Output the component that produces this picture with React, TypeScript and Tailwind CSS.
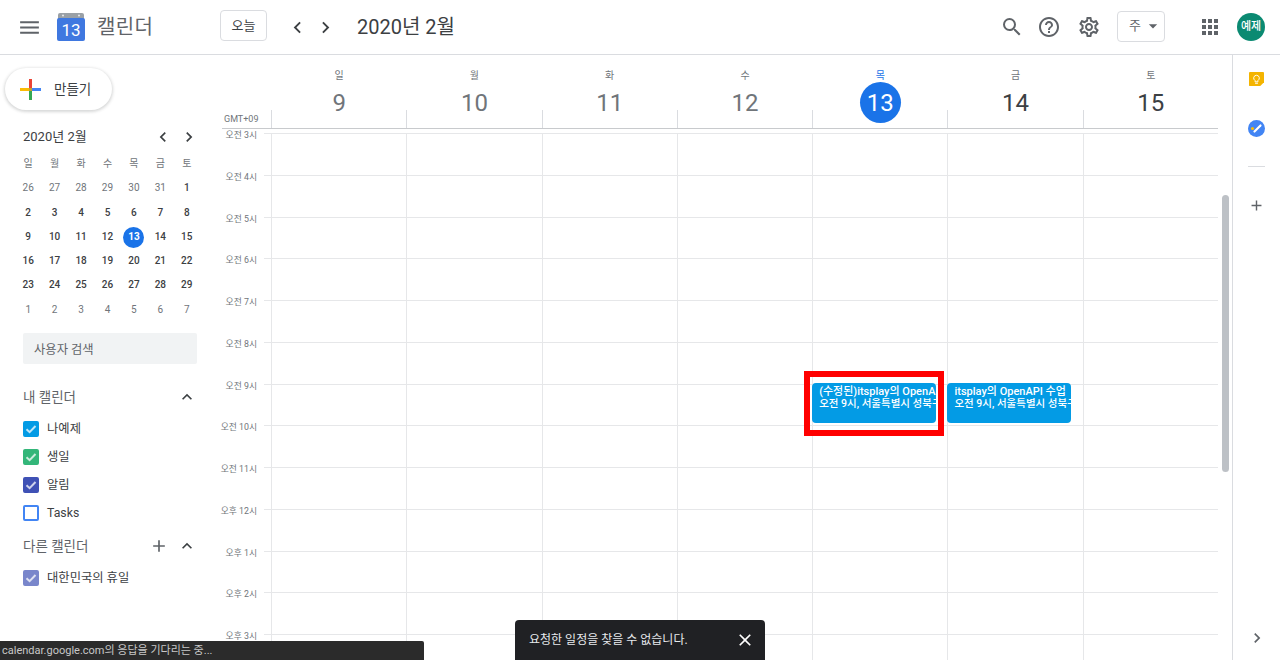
import {
  MdAdd,
  MdApps,
  MdArrowDropDown,
  MdChevronLeft,
  MdChevronRight,
  MdClose,
  MdExpandLess,
  MdHelpOutline,
  MdMenu,
  MdOutlineSettings,
  MdSearch,
} from 'react-icons/md';

const weekdays = ['일', '월', '화', '수', '목', '금', '토'];

const days = [
  { label: '일', date: 9, past: true },
  { label: '월', date: 10, past: true },
  { label: '화', date: 11, past: true },
  { label: '수', date: 12, past: true },
  { label: '목', date: 13, today: true },
  { label: '금', date: 14 },
  { label: '토', date: 15 },
];

const hours = [
  '오전 3시', '오전 4시', '오전 5시', '오전 6시', '오전 7시', '오전 8시', '오전 9시',
  '오전 10시', '오전 11시', '오후 12시', '오후 1시', '오후 2시', '오후 3시',
];

const miniCal = [
  [26, 27, 28, 29, 30, 31, 1],
  [2, 3, 4, 5, 6, 7, 8],
  [9, 10, 11, 12, 13, 14, 15],
  [16, 17, 18, 19, 20, 21, 22],
  [23, 24, 25, 26, 27, 28, 29],
  [1, 2, 3, 4, 5, 6, 7],
];

const myCalendars = [
  { name: '나예제', color: 'bg-[#039be5] border-[#039be5]', checked: true },
  { name: '생일', color: 'bg-[#33b679] border-[#33b679]', checked: true },
  { name: '알림', color: 'bg-[#3f51b5] border-[#3f51b5]', checked: true },
  { name: 'Tasks', color: 'bg-white border-[#4285f4]', checked: false },
];

const CalendarRow = ({ name, color, checked }: { name: string; color: string; checked: boolean }) => (
  <div className="flex h-[28px] items-center pl-[23px]">
    <div className={`flex h-[16px] w-[16px] items-center justify-center rounded-[2px] border-2 ${color}`}>
      {checked && (
        <svg width="12" height="12" viewBox="0 0 12 12">
          <path d="M1.5 6.2L4.6 9.2L10.5 3" fill="none" stroke="#fff" strokeOpacity="0.75" strokeWidth="2" />
        </svg>
      )}
    </div>
    <span className="ml-[8px] text-[12.3px] text-[#3c4043]">{name}</span>
  </div>
);

const EventChip = ({ title }: { title: string }) => (
  <div className="absolute left-[-1px] top-[-2px] z-10 h-[40px] w-[124px] overflow-hidden rounded-[4px] bg-[#039be5] pl-[7px] pt-[3px] text-[11px] font-medium leading-[12px] whitespace-nowrap text-white">
    <div>{title}</div>
    <div className="text-[10.5px]">오전 9시, 서울특별시 성북구</div>
  </div>
);

const Header = () => (
  <header className="flex h-[55px] shrink-0 items-center border-b border-[#dadce0] text-[#5f6368]">
    <MdMenu className="ml-[17px] text-[25px]" />
    <svg className="ml-[15px]" width="28" height="28" viewBox="0 0 28 28">
      <rect x="1" y="0" width="26" height="8" rx="2" fill="#9aa0a6" />
      <circle cx="6" cy="2.5" r="1" fill="#e8eaed" />
      <circle cx="22" cy="2.5" r="1" fill="#e8eaed" />
      <rect x="0" y="5" width="28" height="23" rx="2" fill="#3f78e0" />
      <text x="14" y="23" textAnchor="middle" fontSize="17" fill="#fff" fontFamily="Roboto">13</text>
    </svg>
    <span className="ml-[12px] w-[123px] text-[20px] tracking-[0.4px]">캘린더</span>
    <button className="mb-[3px] h-[31px] w-[47px] rounded-[4px] border border-[#dadce0] text-[13px] text-[#3c4043]">오늘</button>
    <MdChevronLeft className="ml-[19px] text-[23px] text-[#3c4043]" />
    <MdChevronRight className="ml-[5px] text-[23px] text-[#3c4043]" />
    <span className="mb-[1px] ml-[20px] text-[20px] text-[#3c4043]">2020년 2월</span>
    <div className="ml-auto flex items-center">
      <MdSearch className="text-[24px]" />
      <MdHelpOutline className="ml-[13px] text-[24px]" />
      <MdOutlineSettings className="ml-[16px] text-[24px]" />
      <button className="mb-[2px] ml-[16px] flex h-[31px] w-[48px] items-center rounded-[4px] border border-[#dadce0] pl-[11px] text-[13px]">
        주
        <MdArrowDropDown className="ml-[2px] text-[20px]" />
      </button>
      <MdApps className="ml-[33px] text-[24px]" />
      <div className="ml-[15px] mr-[15px] flex h-[28px] w-[28px] items-center justify-center rounded-full bg-[#0b8a72] text-[11px] font-medium text-white">
        예제
      </div>
    </div>
  </header>
);

const Sidebar = () => (
  <aside className="w-[216px] shrink-0">
    <div className="pl-[5px] pt-[13px]">
      <button className="flex h-[42px] w-[107px] items-center rounded-full bg-white pl-[15px] text-[13.5px] text-[#3c4043] shadow-[0_1px_3px_1px_rgba(60,64,67,0.2)]">
        <svg width="21" height="21" viewBox="0 0 21 21">
          <rect x="9" y="0" width="3" height="9" fill="#ea4335" />
          <rect x="12" y="9" width="9" height="3" fill="#4285f4" />
          <rect x="9" y="12" width="3" height="9" fill="#34a853" />
          <rect x="0" y="9" width="9" height="3" fill="#fbbc04" />
          <rect x="9" y="9" width="3" height="3" fill="#c5a032" />
        </svg>
        <span className="ml-[13px]">만들기</span>
      </button>
    </div>

    <div className="flex h-[24px] items-center pl-[23px] pr-[17px] mt-[15px] text-[13px] text-[#3c4043]">
      <span>2020년 2월</span>
      <MdChevronLeft className="ml-auto text-[20px]" />
      <MdChevronRight className="ml-[6px] text-[20px]" />
    </div>

    <div className="ml-[15px] mt-[3px] grid w-[185px] grid-cols-7 text-center text-[10px] leading-[24.3px]">
      {weekdays.map((d) => (
        <div key={d} className="text-[#70757a]">{d}</div>
      ))}
      {miniCal.map((week, w) =>
        week.map((d, i) => {
          const dim = (w === 0 && d > 7) || w === 5;
          const today = w === 2 && d === 13;
          return (
            <div key={`${w}-${i}`} className="flex h-[24.3px] items-center justify-center">
              {today ? (
                <span className="flex h-[21px] w-[21px] items-center justify-center rounded-full bg-[#1a73e8] font-bold text-white">{d}</span>
              ) : (
                <span className={dim ? 'text-[#70757a]' : 'font-medium text-[#3c4043]'}>{d}</span>
              )}
            </div>
          );
        })
      )}
    </div>

    <div className="ml-[23px] mt-[11px] flex h-[31px] w-[174px] items-center rounded-[2px] bg-[#f1f3f4] pl-[11px] pt-[4px] text-[12.3px] text-[#5f6368]">
      사용자 검색
    </div>

    <div className="mt-[19px] flex h-[28px] items-center pl-[23px] pr-[19px] text-[13.5px] text-[#5f6368]">
      <span>내 캘린더</span>
      <MdExpandLess className="ml-auto text-[20px] text-[#3c4043]" />
    </div>
    <div className="mt-[4px]">
      {myCalendars.map((c) => (
        <CalendarRow key={c.name} {...c} />
      ))}
    </div>
    <div className="mt-[5px] flex h-[28px] items-center pl-[23px] pr-[19px] text-[13.5px] text-[#5f6368]">
      <span>다른 캘린더</span>
      <MdAdd className="ml-auto text-[20px]" />
      <MdExpandLess className="ml-[8px] text-[20px] text-[#3c4043]" />
    </div>
    <div className="mt-[4px]">
      <CalendarRow name="대한민국의 휴일" color="bg-[#7986cb] border-[#7986cb]" checked />
    </div>
  </aside>
);

const WeekGrid = () => (
  <main className="relative min-w-0 flex-1 overflow-hidden">
    {/* day header */}
    <div className="relative ml-[6px] mr-[14px] flex h-[74px] border-b border-[#c8cacd] pl-[49px]">
      <span className="absolute bottom-[3px] left-[2px] text-[9px] leading-[12px] text-[#70757a]">GMT+09</span>
      <div className="grid flex-1 grid-cols-7">
        {days.map((d) => (
          <div key={d.date} className="relative flex flex-col items-center pl-[1px] pt-[14px]">
            <span className={`h-[13px] text-[10px] leading-[13px] ${d.today ? 'text-[#1a73e8]' : 'text-[#70757a]'}`}>{d.label}</span>
            <span
              className={`flex h-[41px] w-[41px] items-center justify-center rounded-full text-[24px] ${
                d.today ? 'bg-[#1a73e8] text-white' : d.past ? 'text-[#70757a]' : 'text-[#3c4043]'
              }`}
            >
              {d.date}
            </span>
            <div className="absolute bottom-0 left-0 h-[18px] w-px bg-[#dadce0]" />
          </div>
        ))}
      </div>
    </div>

    {/* hour rows */}
    <div className="mr-[14px] pt-[4px]">
      {hours.map((h) => (
        <div key={h} className="flex h-[41.75px]">
          <div className="w-[41px] whitespace-nowrap text-right text-[8.8px] leading-[10px] text-[#70757a] -mt-[3px]">{h}</div>
          <div className="ml-[7px] w-[7px] border-t border-[#e6e7e9]" />
          <div className="grid flex-1 grid-cols-7">
            {days.map((d) => (
              <div key={d.date} className="relative border-l border-t border-[#e6e7e9]">
                {h === '오전 9시' && d.date === 13 && <EventChip title="(수정된)itsplay의 OpenAPI 수업" />}
                {h === '오전 9시' && d.date === 14 && <EventChip title="itsplay의 OpenAPI 수업" />}
              </div>
            ))}
          </div>
        </div>
      ))}
    </div>

    {/* red annotation box */}
    <div className="absolute left-[588px] top-[316px] z-20 h-[65px] w-[140px] border-[6px] border-[#ff0000]" />

    {/* scrollbar */}
    <div className="absolute left-[1006px] top-[140px] h-[277px] w-[7px] rounded-full bg-[#bdc1c6]" />
  </main>
);

const RightPanel = () => (
  <aside className="flex w-[48px] shrink-0 flex-col items-center border-l border-[#dadce0] pt-[17px]">
    <svg width="15" height="15" viewBox="0 0 16 16">
      <path d="M1 0h14a1 1 0 0 1 1 1v10l-4 4H1a1 1 0 0 1-1-1V1a1 1 0 0 1 1-1z" fill="#f4b400" />
      <path d="M8 3.5a3 3 0 0 0-1.5 5.6V10.5h3V9.1A3 3 0 0 0 8 3.5z" fill="none" stroke="#fff" strokeWidth="1" />
      <rect x="6.5" y="11.5" width="3" height="1" fill="#fff" />
    </svg>
    <svg className="mt-[33px]" width="17" height="17" viewBox="0 0 17 17">
      <circle cx="8.5" cy="8.5" r="8.5" fill="#4285f4" />
      <path d="M6.5 11.5L12.5 5.5" stroke="#fff" strokeWidth="2.2" strokeLinecap="round" />
      <circle cx="4.5" cy="8.5" r="1.6" fill="#fbbc04" />
    </svg>
    <div className="mt-[29px] h-px w-[17px] bg-[#dadce0]" />
    <MdAdd className="mt-[30px] text-[17px] text-[#5f6368]" />
    <MdChevronRight className="mt-auto mb-[12px] text-[20px] text-[#5f6368]" />
  </aside>
);

export default function App() {
  return (
    <div className="relative flex h-[660px] w-[1280px] flex-col overflow-hidden bg-white font-['Roboto','Noto_Sans_CJK_KR',sans-serif]">
      <Header />
      <div className="flex min-h-0 flex-1">
        <Sidebar />
        <WeekGrid />
        <RightPanel />
      </div>

      {/* browser status bubble */}
      <div className="absolute bottom-0 left-0 z-30 h-[19px] w-[424px] rounded-tr-[2px] bg-[#2b2b2b] pl-[2px] text-[11px] leading-[19px] text-[#c8c8c8]">
        calendar.google.com의 응답을 기다리는 중...
      </div>

      {/* snackbar */}
      <div className="absolute bottom-0 left-[515px] z-30 flex h-[40px] w-[250px] items-center rounded-t-[4px] bg-[#202124] pl-[14px] text-[12px] text-[#e8eaed]">
        요청한 일정을 찾을 수 없습니다.
        <MdClose className="ml-auto mr-[10px] text-[20px] text-white" />
      </div>
    </div>
  );
}
